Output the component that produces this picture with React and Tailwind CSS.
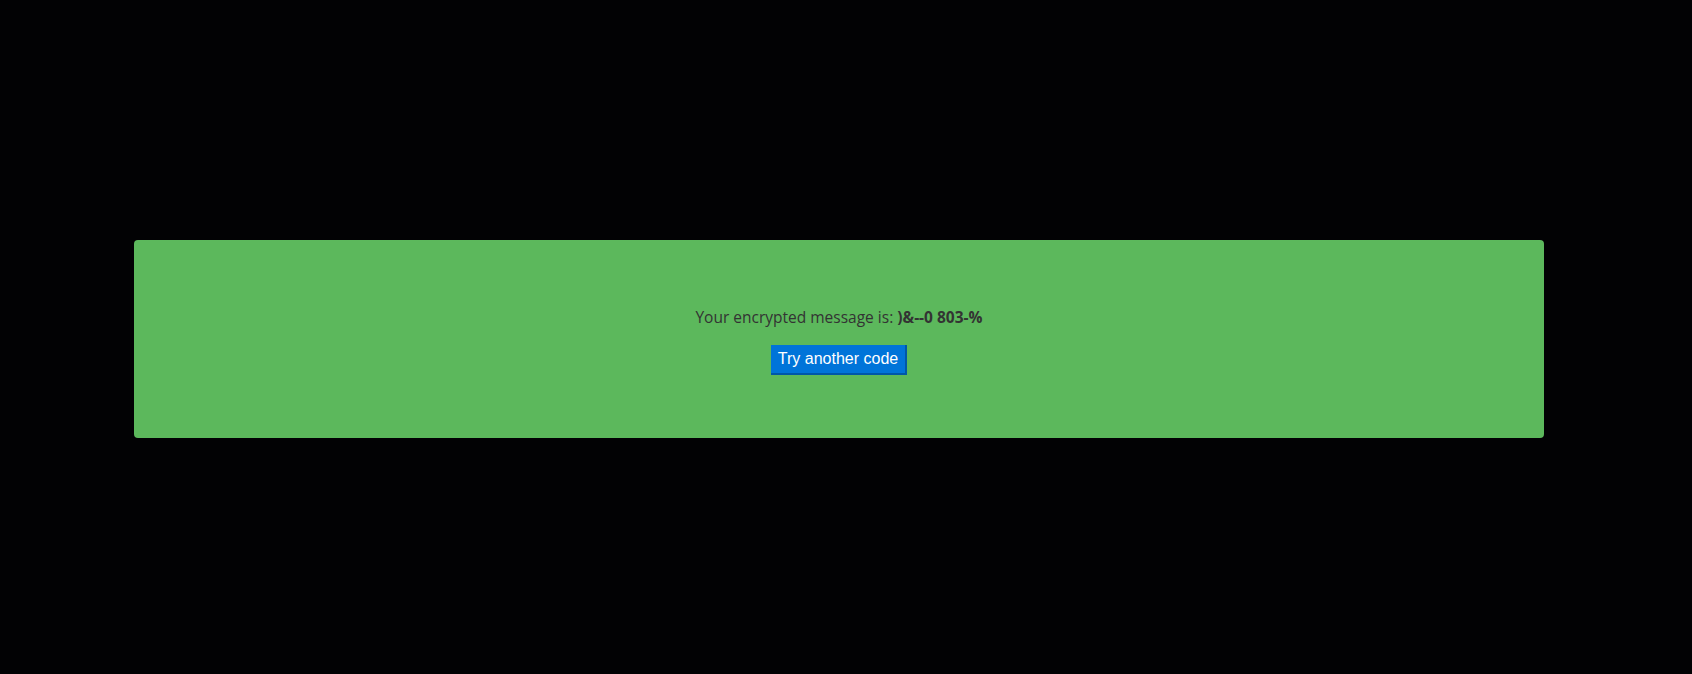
import React from "react";

const App = () => {
  return (
    <main className="w-full h-[674px] bg-[#020204] flex justify-center pt-[240px] pr-[14px]">
      <section className="w-[1410px] h-[198px] rounded bg-[#5cb85c] flex flex-col items-center pt-[65px]">
        <p className="text-[15.5px] leading-6 text-[#333] mb-[16px] font-['Open_Sans',sans-serif]">
          Your encrypted message is: <strong className="font-bold">)&amp;--0 803-%</strong>
        </p>
        <button className="h-[30px] px-[7px] bg-[#0074d9] text-white text-[16px] font-['Liberation_Sans',Arial,sans-serif] border-r-2 border-b-2 border-[#0057a8]">
          Try another code
        </button>
      </section>
    </main>
  );
};

export default App;
